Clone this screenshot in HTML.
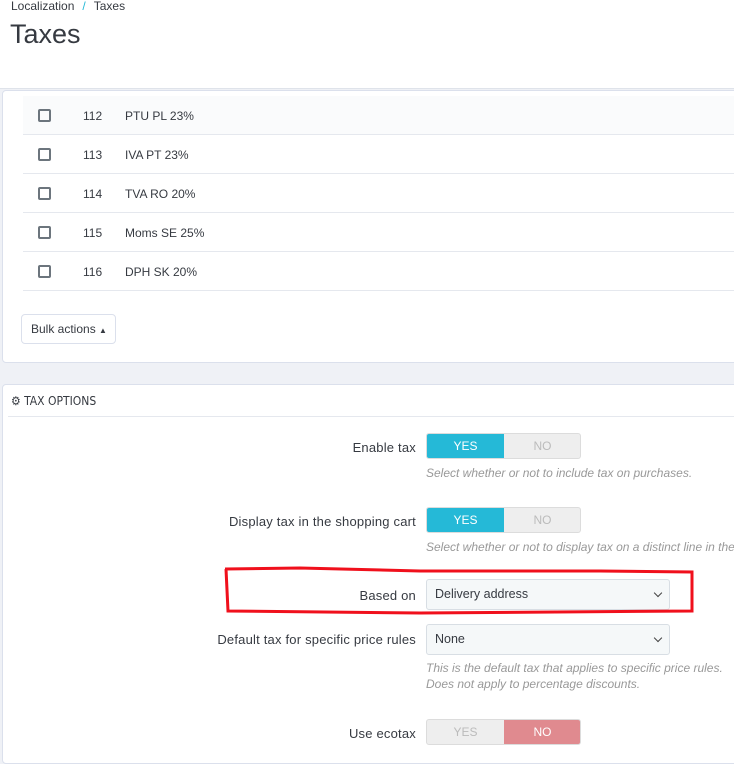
<!DOCTYPE html>
<html><head><style>
*{box-sizing:border-box;margin:0;padding:0}
body{width:734px;height:750px;overflow:hidden;background:#eff1f6;font-family:"Liberation Sans",sans-serif;color:#363a41;position:relative;font-size:12px}
.hdr{position:absolute;left:0;top:0;width:734px;height:89px;background:#fff;border-bottom:1px solid #dfe3ea}
.bc{position:absolute;left:11px;top:-1px;font-size:12px;color:#363a41}
.bc span{color:#25b9d7;margin:0 8px}
h1{position:absolute;left:10px;top:19px;font-size:27px;font-weight:normal;color:#363a41}
.panel{position:absolute;left:2px;width:740px;background:#fff;border:1px solid #dbe0ec;border-radius:4px}
.row{position:absolute;left:20px;width:720px;height:39px;border-bottom:1px solid #e5e8ee;font-size:12px}
.row .cb{position:absolute;left:15px;top:13px;width:13px;height:13px;border:2px solid #6c757d;border-radius:2px}
.row .id{position:absolute;left:60px;top:13px}
.row .nm{position:absolute;left:102px;top:13px}
.bulk{position:absolute;left:18px;top:223px;width:95px;height:30px;border:1px solid #dbe0ec;border-radius:4px;font-size:12px;padding:7px 0 0 9px;color:#363a41}
.lbl{position:absolute;right:318px;font-size:13px;letter-spacing:0.2px;color:#363a41;text-align:right}
.sw{position:absolute;left:426px;width:155px;height:26px;border-radius:3px;overflow:hidden;background:#eee;border:1px solid #dcdcdc;font-size:12px}
.sw div{position:absolute;top:0;width:77px;height:26px;text-align:center;line-height:24px}
.help{position:absolute;left:426px;font-size:12px;font-style:italic;color:#999}
.sel{position:absolute;left:426px;width:244px;height:31px;background:#f5f8f9;border:1px solid #d8dee4;border-radius:3px;font-size:12.5px;padding:7px 0 0 8px}
.sel:after{content:"";position:absolute;right:8px;top:10px;width:5px;height:5px;border-right:1.5px solid #444;border-bottom:1.5px solid #444;transform:rotate(45deg)}
</style></head><body>
<div class="hdr"><div class="bc">Localization<span>/</span>Taxes</div><h1>Taxes</h1></div>
<div class="panel" style="top:90px;height:273px">
  <div class="row" style="top:5px;background:#fafbfc"><div class="cb"></div><div class="id">112</div><div class="nm">PTU PL 23%</div></div>
  <div class="row" style="top:44px"><div class="cb"></div><div class="id">113</div><div class="nm">IVA PT 23%</div></div>
  <div class="row" style="top:83px"><div class="cb"></div><div class="id">114</div><div class="nm">TVA RO 20%</div></div>
  <div class="row" style="top:122px"><div class="cb"></div><div class="id">115</div><div class="nm">Moms SE 25%</div></div>
  <div class="row" style="top:161px"><div class="cb"></div><div class="id">116</div><div class="nm">DPH SK 20%</div></div>
  <div class="bulk">Bulk actions <span style="font-size:8px">▲</span></div>
</div>
<div class="panel" style="top:384px;height:380px">
  <div style="position:absolute;left:8px;top:9px;font-size:12px;font-family:'DejaVu Sans Condensed','Liberation Sans Narrow',sans-serif;color:#363a41">⚙ TAX OPTIONS</div>
  <div style="position:absolute;left:5px;right:0;top:31px;border-top:1px solid #e5e8ee"></div>
</div>
<div class="lbl" style="top:440px">Enable tax</div>
<div class="sw" style="top:433px"><div style="left:0;background:#25b9d7;color:#fff">YES</div><div style="left:77px;color:#bbb">NO</div></div>
<div class="help" style="top:466px">Select whether or not to include tax on purchases.</div>
<div class="lbl" style="top:514px">Display tax in the shopping cart</div>
<div class="sw" style="top:507px"><div style="left:0;background:#25b9d7;color:#fff">YES</div><div style="left:77px;color:#bbb">NO</div></div>
<div class="help" style="top:540px;white-space:nowrap">Select whether or not to display tax on a distinct line in the cart.</div>
<div class="lbl" style="top:588px">Based on</div>
<div class="sel" style="top:579px">Delivery address</div>
<div class="lbl" style="top:632px">Default tax for specific price rules</div>
<div class="sel" style="top:624px">None</div>
<div class="help" style="top:660px;line-height:16px">This is the default tax that applies to specific price rules.<br>Does not apply to percentage discounts.</div>
<div class="lbl" style="top:726px">Use ecotax</div>
<div class="sw" style="top:719px"><div style="left:0;color:#bbb">YES</div><div style="left:77px;background:#e08a8f;color:#fff">NO</div></div>
<svg style="position:absolute;left:0;top:0" width="734" height="750"><polyline points="225,569 300,568 420,571 600,571 692,572 692,611 420,613 228,611 226,569" fill="none" stroke="#f0101c" stroke-width="3"/></svg>
</body></html>
